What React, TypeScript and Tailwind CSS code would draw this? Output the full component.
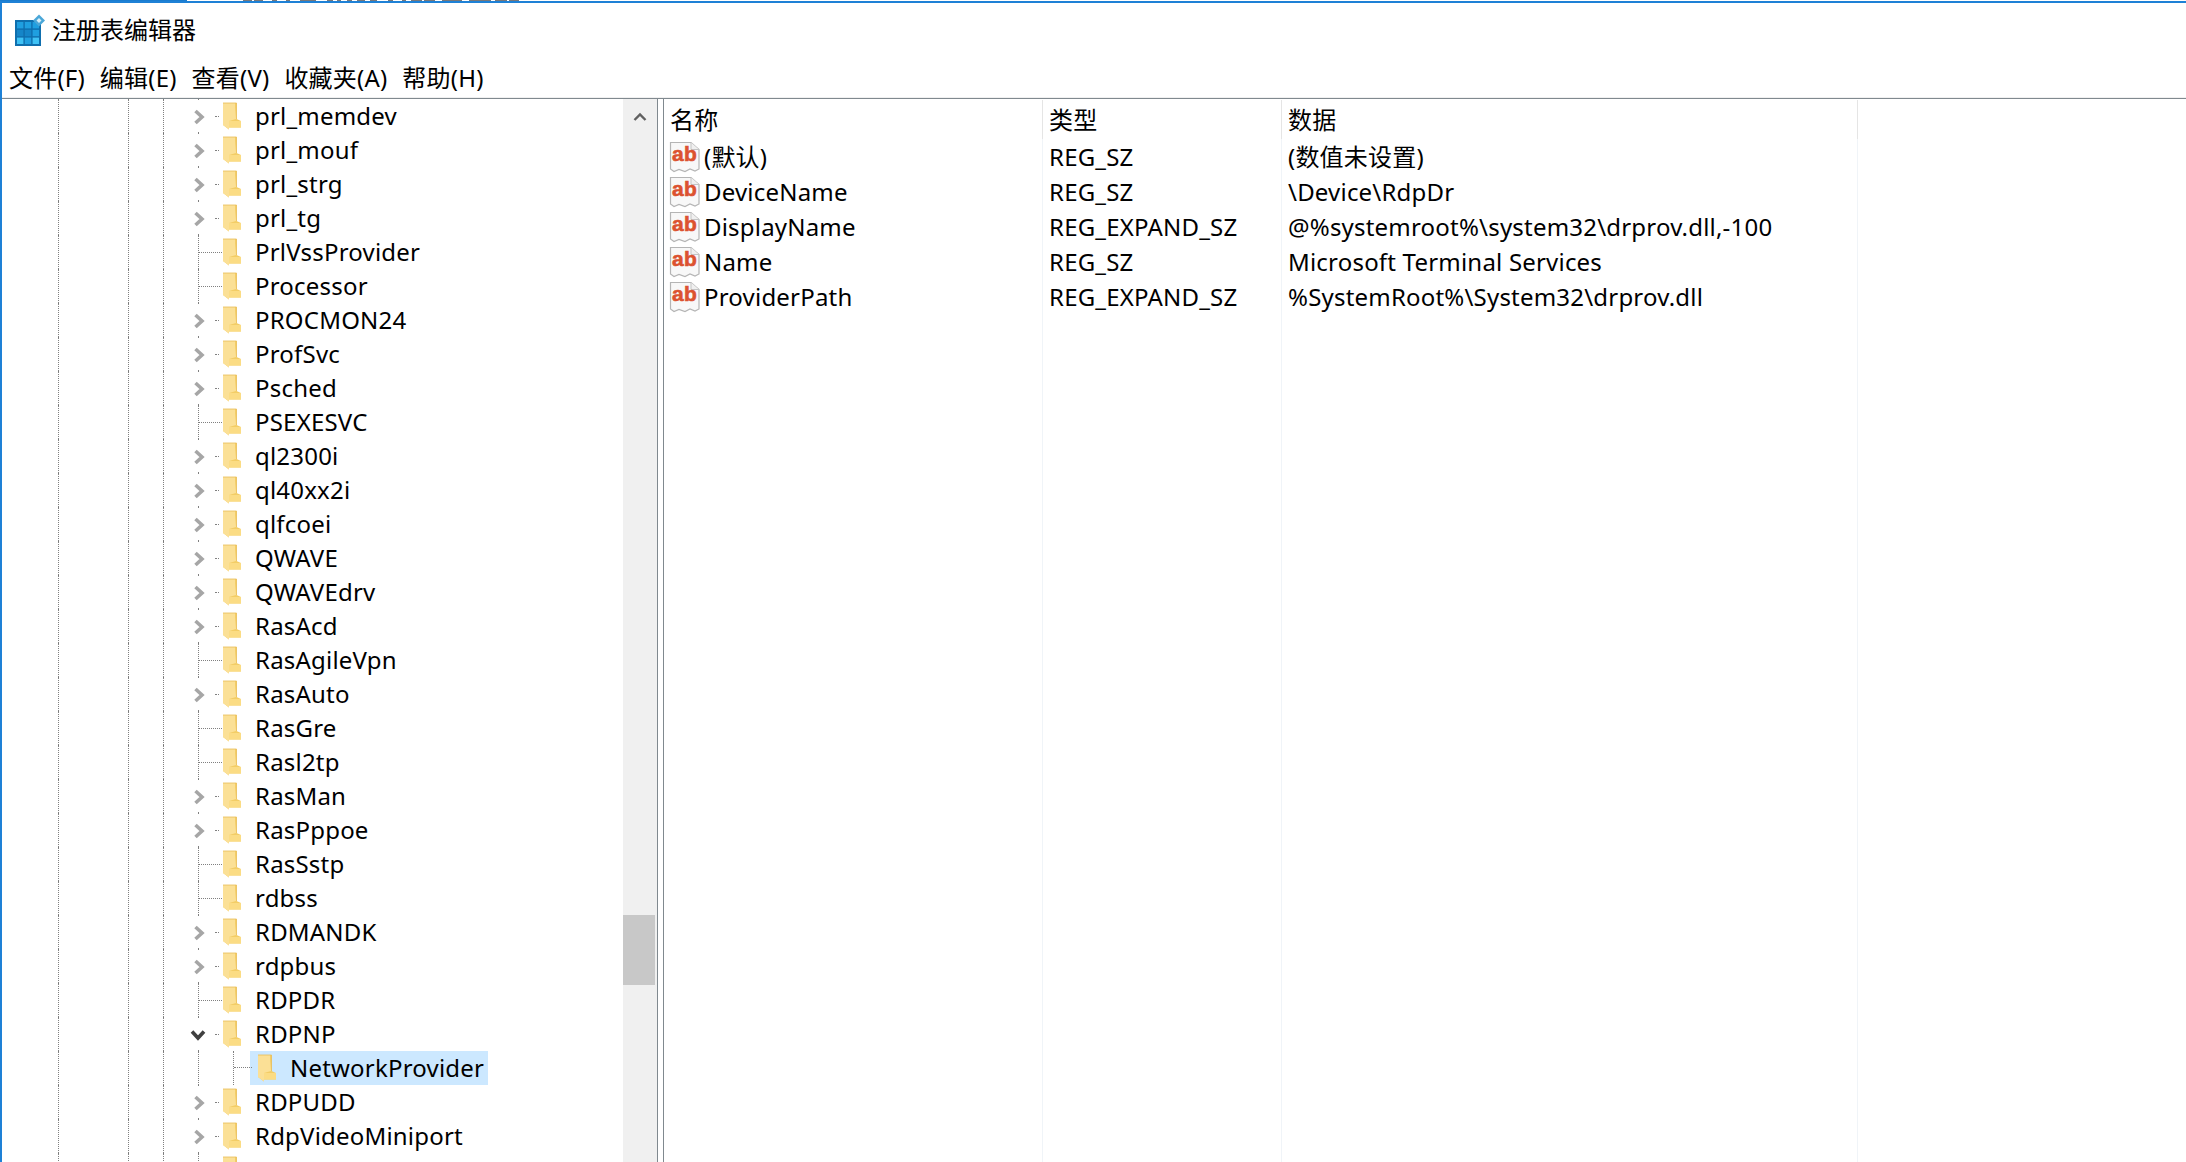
import React from "react";

const FONT = { fontFamily: '"Noto Sans", "Noto Sans CJK SC", sans-serif' };

const frags = [
  [243, 9], [254, 9], [272, 5], [286, 4], [300, 16], [327, 6], [337, 4], [347, 5], [357, 8], [370, 7], [388, 5], [402, 4], [411, 11], [424, 11], [442, 20], [469, 22], [495, 12], [509, 10],
];

type Kind = "c" | "l" | "o";
const rows: [string, Kind][] = [
  ["prl_memdev", "c"], ["prl_mouf", "c"], ["prl_strg", "c"], ["prl_tg", "c"], ["PrlVssProvider", "l"], ["Processor", "l"],
  ["PROCMON24", "c"], ["ProfSvc", "c"], ["Psched", "c"], ["PSEXESVC", "l"], ["ql2300i", "c"], ["ql40xx2i", "c"], ["qlfcoei", "c"],
  ["QWAVE", "c"], ["QWAVEdrv", "c"], ["RasAcd", "c"], ["RasAgileVpn", "l"], ["RasAuto", "c"], ["RasGre", "l"], ["Rasl2tp", "l"],
  ["RasMan", "c"], ["RasPppoe", "c"], ["RasSstp", "l"], ["rdbss", "l"], ["RDMANDK", "c"], ["rdpbus", "c"], ["RDPDR", "l"], ["RDPNP", "o"],
];
const rowsAfter: [string, Kind][] = [["RDPUDD", "c"], ["RdpVideoMiniport", "c"], ["", "l"]];

const values = [
  ["(默认)", "REG_SZ", "(数值未设置)"],
  ["DeviceName", "REG_SZ", "\\Device\\RdpDr"],
  ["DisplayName", "REG_EXPAND_SZ", "@%systemroot%\\system32\\drprov.dll,-100"],
  ["Name", "REG_SZ", "Microsoft Terminal Services"],
  ["ProviderPath", "REG_EXPAND_SZ", "%SystemRoot%\\System32\\drprov.dll"],
];

function Folder() {
  return (
    <svg width="20" height="28" viewBox="0 0 20 28" className="shrink-0">
      <path d="M1 1H14.5V17L19 19V25.5H7V27.5L1 23Z" fill="#f3cd66" />
      <path d="M7 19H19V25.5H7Z" fill="#fbdc84" />
      <path d="M1 1H13V5L14 17L7 19V27.5L1 23Z" fill="#fbe096" />
      <path d="M1 1H14.5V17" fill="none" stroke="#e8bd55" strokeWidth="0.8" />
    </svg>
  );
}

function RegIcon() {
  return (
    <svg width="32" height="32" viewBox="0 0 32 32" className="shrink-0">
      <path
        d="M1.5 1.5H22L30 8.5V28L26 30L21 28L16 30.5L10 28.5L5 30.5L1.5 28Z"
        fill="#f8f8f8"
        stroke="#b5b5b5"
        strokeWidth="1.2"
      />
      <path d="M22 1.5V8.5H30" fill="#f0f0f0" stroke="#c4c4c4" strokeWidth="1" />
      <text x="3" y="20" fontSize="21" fontWeight="700" fill="#dc5230" stroke="#dc5230" strokeWidth="0.6" style={{ fontFamily: '"Liberation Sans", sans-serif' }}>
        ab
      </text>
    </svg>
  );
}

function AppIcon() {
  const cells = ["#1f9fe0", "#1f9fe0", "#1f9fe0", "#1585c8", "#1585c8", "#1f9fe0", "#3fc2f5", "#1f9fe0", "#3fc2f5"];
  return (
    <svg width="30" height="32" viewBox="0 0 30 32" className="shrink-0">
      <rect x="0" y="6" width="26" height="26" fill="#0f6fae" />
      {cells.map((c, i) => (
        <rect key={i} x={2 + (i % 3) * 7.8} y={8 + Math.floor(i / 3) * 7.8} width="6.4" height="6.4" fill={c} />
      ))}
      <path d="M24 0.5L30 6.5L24 12.5L18 6.5Z" fill="#4aa7d8" />
      <path d="M24 4L26.5 6.5L24 9L21.5 6.5Z" fill="#d8effa" />
    </svg>
  );
}

function Chevron({ open }: { open: boolean }) {
  return open ? (
    <svg width="16" height="12" viewBox="0 0 16 12">
      <path d="M2 2.5L8 9L14 2.5" fill="none" stroke="#404040" strokeWidth="3.6" />
    </svg>
  ) : (
    <svg width="12" height="16" viewBox="0 0 12 16">
      <path d="M2.5 2L9 8L2.5 14" fill="none" stroke="#a6a6a6" strokeWidth="3.6" />
    </svg>
  );
}

function Guides() {
  return (
    <>
      <div className="w-[56px] h-full shrink-0" />
      <div className="w-[70px] h-full shrink-0 border-l border-dotted border-[#808080]" />
      <div className="w-[35px] h-full shrink-0 border-l border-dotted border-[#808080]" />
      <div className="w-[35px] h-full shrink-0 border-l border-dotted border-[#808080]" />
    </>
  );
}

function Row({ name, kind }: { name: string; kind: Kind }) {
  return (
    <div className="flex h-[34px] items-center shrink-0">
      <Guides />
      <div className="relative w-[24px] h-full shrink-0">
        {kind === "l" ? (
          <>
            <div className="h-full w-0 border-l border-dotted border-[#808080]" />
            <div className="absolute left-0 top-[17px] w-[24px] border-t border-dotted border-[#808080]" />
          </>
        ) : (
          <>
            <div className="absolute left-0 top-0 h-[1px] w-[1px] bg-[#808080]" />
            <div className="absolute left-0 bottom-0 h-[1px] w-[1px] bg-[#808080]" />
            <div className="absolute left-[17px] top-[17px] w-[4px] border-t border-dotted border-[#808080]" />
            <div className={kind === "o" ? "absolute left-[-8px] top-[12px]" : "absolute left-[-5px] top-[10px]"}>
              <Chevron open={kind === "o"} />
            </div>
          </>
        )}
      </div>
      <Folder />
      <span className="ml-[13px] whitespace-nowrap">{name}</span>
    </div>
  );
}

function ChildRow() {
  return (
    <div className="flex h-[34px] items-center shrink-0">
      <Guides />
      <div className="w-[35px] h-full shrink-0 border-l border-dotted border-[#808080]" />
      <div className="relative w-[17px] h-full shrink-0 border-l border-dotted border-[#808080]">
        <div className="absolute left-0 top-0 h-[17px] w-[18px] border-b border-dotted border-[#808080]" />
      </div>
      <div className="flex h-full w-[238px] items-center bg-[#cce8ff] pl-[7px]">
        <Folder />
        <span className="ml-[13px] whitespace-nowrap">NetworkProvider</span>
      </div>
    </div>
  );
}

function Column({
  width,
  title,
  children,
}: {
  width: string;
  title: string;
  children: React.ReactNode;
}) {
  return (
    <div className={`flex h-full flex-col ${width}`}>
      <div className="flex h-[39px] shrink-0 items-center border-r border-[#e5e5e5] pl-[6px] pt-[1px]">{title}</div>
      <div className="flex-1 border-r border-[#f0f4f8]">{children}</div>
    </div>
  );
}

export default function App() {
  return (
    <div className="relative flex h-[1162px] w-[2186px] flex-col overflow-hidden bg-white text-[24px] leading-[34px] tracking-[0.2px] text-black" style={FONT}>
      <div className="flex h-[1px] shrink-0">
        <div className="h-full w-[187px] bg-[#1a7ccf]" />
        <div className="relative h-full flex-1">
          {frags.map(([x, w], i) => (
            <div key={i} className="absolute top-0 h-[1px] bg-[#77777a]" style={{ left: x - 187, width: w }} />
          ))}
        </div>
      </div>
      <div className="h-[2px] shrink-0 bg-[#1e81d6]" />
      <div className="flex min-h-0 flex-1 border-l-2 border-[#1e81d6]">
        <div className="flex min-w-0 flex-1 flex-col">
          <div className="flex h-[50px] shrink-0 items-center pl-[13px] pt-[4px]">
            <AppIcon />
            <span className="ml-[7px] tracking-normal">注册表编辑器</span>
          </div>
          <div className="flex h-[46px] shrink-0 items-center gap-[15px] border-b border-[#80898f] pl-[7px] pt-[5px] shadow-[inset_0_-1px_0_#f0f0f0]">
            <span>文件(F)</span>
            <span>编辑(E)</span>
            <span>查看(V)</span>
            <span>收藏夹(A)</span>
            <span>帮助(H)</span>
          </div>
          <div className="flex min-h-0 flex-1">
            <div className="flex h-full w-[656px] shrink-0 border-r border-[#80898f]">
              <div className="flex min-w-0 flex-1 flex-col overflow-hidden">
                {rows.map(([n, k]) => (
                  <Row key={n} name={n} kind={k} />
                ))}
                <ChildRow />
                {rowsAfter.map(([n, k]) => (
                  <Row key={n + k} name={n} kind={k} />
                ))}
              </div>
              <div className="flex h-full w-[34px] shrink-0 flex-col bg-[#f0f0f0]">
                <div className="flex h-[36px] shrink-0 items-center justify-center">
                  <svg width="14" height="10" viewBox="0 0 14 10">
                    <path d="M1.5 8L7 2.5L12.5 8" fill="none" stroke="#606060" strokeWidth="2.4" />
                  </svg>
                </div>
                <div className="mt-[780px] h-[70px] w-[32px] bg-[#c8c8c8]" />
              </div>
            </div>
            <div className="w-[5px] shrink-0" />
            <div className="flex h-full min-w-0 flex-1 border-l border-[#80898f] pt-px">
              <Column width="w-[379px]" title="名称">
                {values.map((v) => (
                  <div key={v[0]} className="flex h-[35px] items-center pl-[5px]">
                    <RegIcon />
                    <span className="ml-[3px] whitespace-nowrap">{v[0]}</span>
                  </div>
                ))}
              </Column>
              <Column width="w-[239px]" title="类型">
                {values.map((v) => (
                  <div key={v[0]} className="flex h-[35px] items-center pl-[6px] whitespace-nowrap">
                    {v[1]}
                  </div>
                ))}
              </Column>
              <Column width="w-[576px]" title="数据">
                {values.map((v) => (
                  <div key={v[0]} className="flex h-[35px] items-center pl-[6px] whitespace-nowrap">
                    {v[2]}
                  </div>
                ))}
              </Column>
            </div>
          </div>
        </div>
      </div>
    </div>
  );
}
